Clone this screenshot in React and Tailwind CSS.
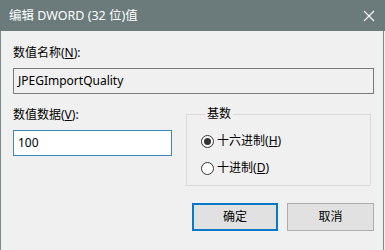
export default function App() {
  const font = { fontFamily: '"Noto Sans", "Noto Sans CJK SC", sans-serif' };
  return (
    <div
      className="w-[385px] h-[250px] bg-[#f0f0f0] flex flex-col text-[12px] text-black overflow-hidden"
      style={font}
    >
      <div className="h-[31px] bg-[#6b7b7c] flex items-center justify-between pl-[9px] pr-[10px] text-white shrink-0">
        <span className="leading-[16px] text-[12.5px]">编辑 DWORD (32 位)值</span>
        <svg width="12" height="12" viewBox="0 0 12 12" className="mr-[0px]">
          <path d="M1 1 L11 11 M11 1 L1 11" stroke="#ffffff" strokeWidth="1.1" fill="none" />
        </svg>
      </div>
      <div className="flex-1 flex flex-col px-[12px] pt-[14px] border-l border-r border-[#7d8b8c] mr-[1px]">
        <div className="leading-[16px] h-[16px]">
          数值名称(<span className="underline">N</span>):
        </div>
        <div className="mt-[7px] h-[26px] w-[361px] border border-[#7a7a7a] flex items-center pl-[4px] leading-[16px]">
          JPEGImportQuality
        </div>
        <div className="mt-[13px] flex gap-[14px]">
          <div className="w-[162px] flex flex-col">
            <div className="leading-[16px] h-[16px]">
              数值数据(<span className="underline">V</span>):
            </div>
            <div className="mt-[7px] h-[26px] border border-[#3f86b8] bg-white flex items-center pl-[4px] leading-[16px]">
              100
            </div>
          </div>
          <fieldset className="w-[188px] -mt-[1px] border border-[#d9d9d9] pl-[14px] pt-[11px] pb-[9px] flex flex-col gap-[11px]">
            <legend className="ml-[4px] px-[2px] leading-[16px]">基数</legend>
            <div className="h-[16px] flex items-center">
              <span className="w-[13px] h-[13px] rounded-full border border-[#333333] bg-white flex items-center justify-center">
                <span className="w-[7px] h-[7px] rounded-full bg-[#333333]" />
              </span>
              <span className="ml-[3px] leading-[16px]">
                十六进制(<span className="underline">H</span>)
              </span>
            </div>
            <div className="h-[16px] flex items-center">
              <span className="w-[13px] h-[13px] rounded-full border border-[#333333] bg-white" />
              <span className="ml-[3px] leading-[16px]">
                十进制(<span className="underline">D</span>)
              </span>
            </div>
          </fieldset>
        </div>
        <div className="mt-[17px] flex justify-end gap-[9px] w-[361px]">
          <div className="w-[86px] h-[28px] border-2 border-[#0a78c8] bg-[#e1e1e1] flex items-center justify-center leading-[16px]">
            确定
          </div>
          <div className="w-[87px] h-[28px] border border-[#adadad] bg-[#e1e1e1] flex items-center justify-center leading-[16px]">
            取消
          </div>
        </div>
      </div>
    </div>
  );
}
